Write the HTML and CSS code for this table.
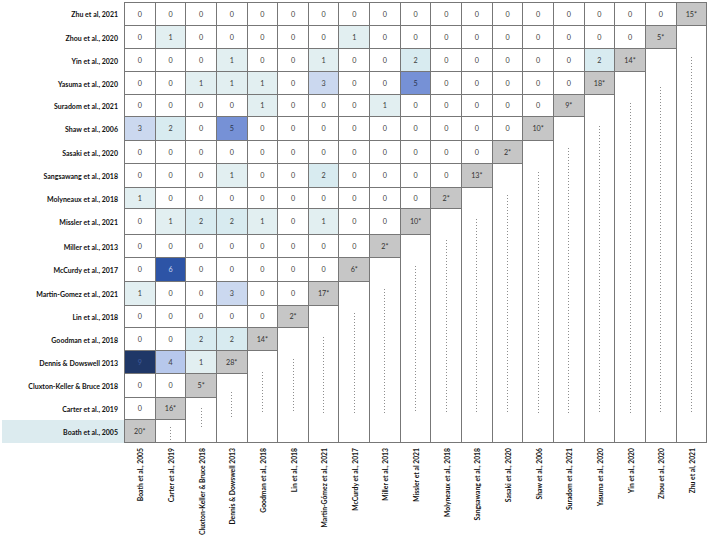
FILE: index.html
```html
<!DOCTYPE html>
<html lang="en">
<head>
<meta charset="utf-8">
<title>Overlap matrix</title>
<link rel="stylesheet" href="styles.css">
</head>
<body>
<div class="matrix">
  <div class="lab">Zhu et al, 2021</div>
  <div class="c t">0</div><div class="c t">0</div><div class="c t">0</div><div class="c t">0</div><div class="c t">0</div><div class="c t">0</div><div class="c t">0</div><div class="c t">0</div><div class="c t">0</div><div class="c t">0</div><div class="c t">0</div><div class="c t">0</div><div class="c t">0</div><div class="c t">0</div><div class="c t">0</div><div class="c t">0</div><div class="c t">0</div><div class="c t">0</div><div class="c t d">15*</div>

  <div class="lab">Zhou et al., 2020</div>
  <div class="c">0</div><div class="c v1">1</div><div class="c">0</div><div class="c">0</div><div class="c">0</div><div class="c">0</div><div class="c">0</div><div class="c v1">1</div><div class="c">0</div><div class="c">0</div><div class="c">0</div><div class="c">0</div><div class="c">0</div><div class="c">0</div><div class="c">0</div><div class="c">0</div><div class="c">0</div><div class="c d">5*</div><div class="lo r18"></div>

  <div class="lab">Yin et al., 2020</div>
  <div class="c">0</div><div class="c">0</div><div class="c">0</div><div class="c v1">1</div><div class="c">0</div><div class="c">0</div><div class="c v1">1</div><div class="c">0</div><div class="c">0</div><div class="c v2">2</div><div class="c">0</div><div class="c">0</div><div class="c">0</div><div class="c">0</div><div class="c">0</div><div class="c v2">2</div><div class="c d">14*</div><div class="lo r17 p-zhou"></div>

  <div class="lab">Yasuma et al., 2020</div>
  <div class="c">0</div><div class="c">0</div><div class="c v1">1</div><div class="c v1">1</div><div class="c v1">1</div><div class="c">0</div><div class="c v3">3</div><div class="c">0</div><div class="c">0</div><div class="c v5">5</div><div class="c">0</div><div class="c">0</div><div class="c">0</div><div class="c">0</div><div class="c">0</div><div class="c d">18*</div><div class="lo r16"></div>

  <div class="lab">Suradom et al., 2021</div>
  <div class="c">0</div><div class="c">0</div><div class="c">0</div><div class="c">0</div><div class="c v1">1</div><div class="c">0</div><div class="c">0</div><div class="c">0</div><div class="c v1">1</div><div class="c">0</div><div class="c">0</div><div class="c">0</div><div class="c">0</div><div class="c">0</div><div class="c d">9*</div><div class="lo r15"></div>

  <div class="lab">Shaw et al., 2006</div>
  <div class="c v3">3</div><div class="c v2">2</div><div class="c">0</div><div class="c v5">5</div><div class="c">0</div><div class="c">0</div><div class="c">0</div><div class="c">0</div><div class="c">0</div><div class="c">0</div><div class="c">0</div><div class="c">0</div><div class="c">0</div><div class="c d">10*</div><div class="lo r14"></div>

  <div class="lab">Sasaki et al., 2020</div>
  <div class="c">0</div><div class="c">0</div><div class="c">0</div><div class="c">0</div><div class="c">0</div><div class="c">0</div><div class="c">0</div><div class="c">0</div><div class="c">0</div><div class="c">0</div><div class="c">0</div><div class="c">0</div><div class="c d">2*</div><div class="lo r13"></div>

  <div class="lab">Sangsawang et al., 2018</div>
  <div class="c">0</div><div class="c">0</div><div class="c">0</div><div class="c v1">1</div><div class="c">0</div><div class="c">0</div><div class="c v2">2</div><div class="c">0</div><div class="c">0</div><div class="c">0</div><div class="c">0</div><div class="c d">13*</div><div class="lo r12"></div>

  <div class="lab">Molyneaux et al., 2018</div>
  <div class="c v1">1</div><div class="c">0</div><div class="c">0</div><div class="c">0</div><div class="c">0</div><div class="c">0</div><div class="c">0</div><div class="c">0</div><div class="c">0</div><div class="c">0</div><div class="c d">2*</div><div class="lo r11"></div>

  <div class="lab">Missler et al., 2021</div>
  <div class="c">0</div><div class="c v1">1</div><div class="c v2">2</div><div class="c v2">2</div><div class="c v1">1</div><div class="c">0</div><div class="c v1">1</div><div class="c">0</div><div class="c">0</div><div class="c d">10*</div><div class="lo r10"></div>

  <div class="lab">Miller et al., 2013</div>
  <div class="c">0</div><div class="c">0</div><div class="c">0</div><div class="c">0</div><div class="c">0</div><div class="c">0</div><div class="c">0</div><div class="c">0</div><div class="c d">2*</div><div class="lo r9"></div>

  <div class="lab">McCurdy et al., 2017</div>
  <div class="c">0</div><div class="c v6">6</div><div class="c">0</div><div class="c">0</div><div class="c">0</div><div class="c">0</div><div class="c">0</div><div class="c d">6*</div><div class="lo r8"></div>

  <div class="lab">Martin-Gomez et al., 2021</div>
  <div class="c v1">1</div><div class="c">0</div><div class="c">0</div><div class="c v3">3</div><div class="c">0</div><div class="c">0</div><div class="c d">17*</div><div class="lo r7"></div>

  <div class="lab">Lin et al., 2018</div>
  <div class="c">0</div><div class="c">0</div><div class="c">0</div><div class="c">0</div><div class="c">0</div><div class="c d">2*</div><div class="lo r6"></div>

  <div class="lab">Goodman et al., 2018</div>
  <div class="c">0</div><div class="c">0</div><div class="c v2">2</div><div class="c v2">2</div><div class="c d">14*</div><div class="lo r5"></div>

  <div class="lab">Dennis &amp; Dowswell 2013</div>
  <div class="c v9">9</div><div class="c v4">4</div><div class="c v1">1</div><div class="c d">28*</div><div class="lo r4 p4"></div>

  <div class="lab">Cluxton-Keller &amp; Bruce 2018</div>
  <div class="c">0</div><div class="c">0</div><div class="c d">5*</div><div class="lo r3 p3"></div>

  <div class="lab">Carter et al., 2019</div>
  <div class="c">0</div><div class="c d">16*</div><div class="lo r2 p2"></div>

  <div class="lab hl">Boath et al., 2005</div>
  <div class="c d">20*</div><div class="lo r1 p1"></div>

  <div class="corner"></div>
  <div class="cl"><span>Boath et al., 2005</span></div>
  <div class="cl"><span>Carter et al., 2019</span></div>
  <div class="cl"><span>Cluxton-Keller &amp; Bruce 2018</span></div>
  <div class="cl"><span>Dennis &amp; Dowswell 2013</span></div>
  <div class="cl"><span>Goodman et al., 2018</span></div>
  <div class="cl"><span>Lin et al., 2018</span></div>
  <div class="cl"><span>Martin-Gómez et al., 2021</span></div>
  <div class="cl"><span>McCurdy et al., 2017</span></div>
  <div class="cl"><span>Miller et al., 2013</span></div>
  <div class="cl"><span>Missler et al 2021</span></div>
  <div class="cl"><span>Molyneaux et al., 2018</span></div>
  <div class="cl"><span>Sangsawang et al., 2018</span></div>
  <div class="cl"><span>Sasaki et al., 2020</span></div>
  <div class="cl"><span>Shaw et al., 2006</span></div>
  <div class="cl"><span>Suradom et al., 2021</span></div>
  <div class="cl"><span>Yasuma et al., 2020</span></div>
  <div class="cl"><span>Yin et al., 2020</span></div>
  <div class="cl"><span>Zhou et al., 2020</span></div>
  <div class="cl"><span>Zhu et al, 2021</span></div>
</div>
</body>
</html>
```

FILE: styles.css
```css
* { box-sizing: border-box; }

body {
  margin: 0;
  background: #ffffff;
  font-family: Lato, "Liberation Sans", sans-serif;
  overflow: hidden;
}

.matrix {
  display: grid;
  margin-top: 2px;
  width: 708px;
  grid-template-columns: 125px repeat(19, 30.65px);
  grid-template-rows: 24px 23px 23px 23px 22px 24px 23px 24px 21px 26px 23px 24px 24px 22px 23px 23px 24px 22px 23px 94px;
}

.lab {
  display: flex;
  align-items: center;
  justify-content: flex-end;
  padding-right: 6px;
  border-right: 1px solid #777777;
  font-weight: 700;
  font-size: 7px;
  color: #111111;
  white-space: nowrap;
}

.lab.hl {
  background: #dcebef;
  margin-left: 2px;
}

.c {
  display: flex;
  align-items: center;
  justify-content: center;
  border-right: 1px solid #777777;
  border-bottom: 1px solid #777777;
  font-size: 7.2px;
  color: #404040;
}

.t { border-top: 1px solid #777777; }

.v1 { background: #e2eff1; }
.v2 { background: #d8ebf0; }
.v3 { background: #cbd8ef; }
.v4 { background: #b7c8ec; }
.v5 { background: #7691d6; color: #2b3550; }
.v6 { background: #2d54a6; color: #c9d5f1; }
.v9 { background: #1f3767; color: #3e5a9c; }
.d { background: #c6c6c6; color: #333333; }

.lo {
  display: flex;
  justify-content: center;
  border-right: 1px solid #777777;
  border-bottom: 1px solid #777777;
  padding: 31px 0 29px;
}

.lo::before {
  content: "";
  width: 1px;
  background: repeating-linear-gradient(to bottom, #8e8e8e 0 1px, transparent 1px 3px);
}

.p-zhou { padding-top: 38px; }
.p4 { padding: 21px 0 28px; }
.p3 { padding: 18px 0 24px; }
.p2 { padding: 10px 0 15px; }
.p1 { padding: 7px 0 2px; }

.r1 { grid-row: span 1; }
.r2 { grid-row: span 2; }
.r3 { grid-row: span 3; }
.r4 { grid-row: span 4; }
.r5 { grid-row: span 5; }
.r6 { grid-row: span 6; }
.r7 { grid-row: span 7; }
.r8 { grid-row: span 8; }
.r9 { grid-row: span 9; }
.r10 { grid-row: span 10; }
.r11 { grid-row: span 11; }
.r12 { grid-row: span 12; }
.r13 { grid-row: span 13; }
.r14 { grid-row: span 14; }
.r15 { grid-row: span 15; }
.r16 { grid-row: span 16; }
.r17 { grid-row: span 17; }
.r18 { grid-row: span 18; }

.cl {
  display: flex;
  justify-content: center;
  align-items: flex-start;
  padding-top: 5px;
}

.cl span {
  writing-mode: vertical-rl;
  transform: rotate(180deg);
  font-weight: 700;
  font-size: 6.8px;
  color: #111111;
  white-space: nowrap;
}
```
